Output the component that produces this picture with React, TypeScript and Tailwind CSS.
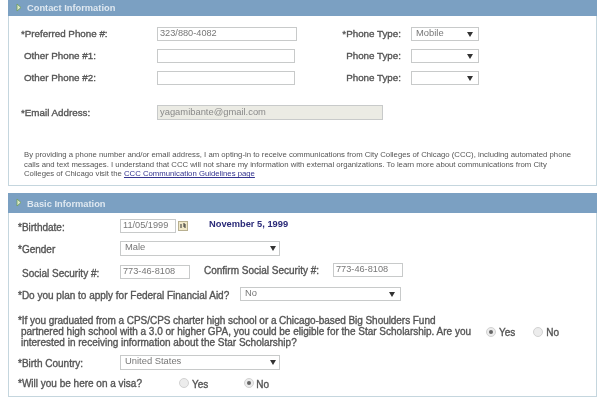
import React from "react";

const Caret = () => (
  <svg width="6" height="5" viewBox="0 0 6 5" className="shrink-0"><path d="M0 0H6L3 5Z" fill="#333" /></svg>
);

const Select = ({ value, className }: { value?: string; className: string }) => (
  <div className={`flex items-center justify-between border border-[#c8caca] bg-white pl-1 text-[9.4px] text-[#777] ${className}`}>
    <span className="-mt-[2px]">{value}</span>
    <Caret />
  </div>
);

const Field = ({ value, className }: { value?: string; className: string }) => (
  <div className={`flex items-center border border-[#c8caca] bg-white pl-[2px] text-[9.2px] text-[#777] ${className}`}>{value}</div>
);

const Radio = ({ on }: { on?: boolean }) => (
  <span className="flex h-[10px] w-[10px] shrink-0 items-center justify-center rounded-full border border-[#d2d2d2] bg-[#ececec]">
    {on && <span className="h-[4px] w-[4px] rounded-full bg-[#666]" />}
  </span>
);

const Header = ({ title, className, titleClass }: { title: string; className: string; titleClass: string }) => (
  <div className={`flex items-center bg-[#7ba0c2] pl-[8px] ${className}`}>
    <svg width="6" height="9" viewBox="0 0 6 9" className="mr-[5px] -mt-[2px]"><path d="M1 1L5 4.5L1 8Z" fill="#dbe8c8" stroke="#6e9e58" strokeWidth="0.8" /></svg>
    <span className={`text-[9.3px] font-bold text-[#dfe8f0] ${titleClass}`}>{title}</span>
  </div>
);

const label = "text-[10px] text-[#555] [-webkit-text-stroke:0.35px_#555]";
const small = "mt-[1px] text-[9.8px] text-[#555] [-webkit-text-stroke:0.35px_#555]";

export default function App() {
  return (
    <div className="h-[401px] w-[604px] overflow-hidden bg-white pl-[8px] [font-family:'Liberation_Sans',Arial,sans-serif] blur-[0.3px]">
      <section className="h-[186px] w-[589px] border-x border-b border-[#c5d6de]">
        <Header title="Contact Information" titleClass="mt-[1px]" className="h-[16px] -mx-px" />
        <div className="flex h-[14px] items-center mt-[11px]">
          <div className={`${small} w-[148px] pl-[12px]`}>*Preferred Phone #:</div>
          <Field value="323/880-4082" className="h-[14px] w-[140px]" />
          <div className={`${small} w-[104px] text-right`}>*Phone Type:</div>
          <Select value="Mobile" className="ml-[10px] h-[14px] w-[68px] pr-[5px]" />
        </div>
        <div className="flex h-[14px] items-center mt-[8px]">
          <div className={`${small} w-[148px] pl-[15px]`}>Other Phone #1:</div>
          <Field className="h-[14px] w-[138px]" />
          <div className={`${small} w-[106px] text-right`}>Phone Type:</div>
          <Select className="ml-[10px] h-[14px] w-[68px] pr-[5px]" />
        </div>
        <div className="flex h-[14px] items-center mt-[8px]">
          <div className={`${small} w-[148px] pl-[15px]`}>Other Phone #2:</div>
          <Field className="h-[14px] w-[138px]" />
          <div className={`${small} w-[106px] text-right`}>Phone Type:</div>
          <Select className="ml-[10px] h-[14px] w-[68px] pr-[5px]" />
        </div>
        <div className="flex h-[15px] items-center mt-[20px]">
          <div className={`${small} w-[148px] pl-[12px]`}>*Email Address:</div>
          <Field value="yagamibante@gmail.com" className="h-[15px] w-[226px] !bg-[#ebebe4] !text-[#8a8a8a] text-[9.4px]" />
        </div>
        <p className="mt-[30px] pl-[15px] text-[7.75px] leading-[9.7px] text-[#555]">
          By providing a phone number and/or email address, I am opting-in to receive communications from City Colleges of Chicago (CCC), including automated phone<br />
          calls and text messages. I understand that CCC will not share my information with external organizations. To learn more about communications from City<br />
          Colleges of Chicago visit the <span className="text-[#33338f] underline">CCC Communication Guidelines page</span>
        </p>
      </section>

      <section className="mt-[7px] h-[204px] w-[589px] border-x border-b border-[#c5d6de]">
        <Header title="Basic Information" titleClass="mt-[3px]" className="h-[20px] -mx-px" />
        <div className="flex h-[14px] items-center mt-[6px]">
          <div className={`${label} w-[111px] pl-[9px] mt-[2px]`}>*Birthdate:</div>
          <Field value="11/05/1999" className="h-[14px] w-[56px]" />
          <svg width="10" height="10" viewBox="0 0 10 10" className="ml-[2px]">
            <rect x="0.5" y="0.5" width="9" height="9" fill="#f0e8c8" stroke="#b8b090" />
            <path d="M3 3V7M5 3H7V7M5 5H7" stroke="#333" strokeWidth="1" fill="none" />
          </svg>
          <div className="ml-[21px] -mt-[3px] text-[9.3px] font-bold text-[#2a2a78]">November 5, 1999</div>
        </div>
        <div className="flex h-[15px] items-center mt-[8px]">
          <div className={`${label} w-[111px] pl-[9px] mt-[2px]`}>*Gender</div>
          <Select value="Male" className="h-[15px] w-[160px] pr-[3px]" />
        </div>
        <div className="flex h-[14px] items-center mt-[9px]">
          <div className={`${label} w-[111px] pl-[13px] mt-[2px]`}>Social Security #:</div>
          <Field value="773-46-8108" className="h-[14px] w-[70px]" />
          <div className={`${label} ml-[14px] w-[129px] -mt-[4px] whitespace-nowrap`}>Confirm Social Security #:</div>
          <Field value="773-46-8108" className="h-[14px] w-[70px] -mt-[4px]" />
        </div>
        <div className="flex h-[14px] items-center mt-[8px]">
          <div className={`${label} w-[231px] pl-[9px] mt-[2px] whitespace-nowrap`}>*Do you plan to apply for Federal Financial Aid?</div>
          <Select value="No" className="h-[14px] w-[161px] pr-[5px]" />
        </div>
        <div className="mt-[14px] flex items-center">
          <div className={`${label} w-[477px] shrink-0 whitespace-nowrap pl-[9px] leading-[11px]`}>
            <span className="tracking-[-0.05px]">*If you graduated from a CPS/CPS charter high school or a Chicago-based Big Shoulders Fund</span><br />
            <span className="pl-[3px]">partnered high school with a 3.0 or higher GPA, you could be eligible for the Star Scholarship. Are you</span><br />
            <span className="pl-[3px]">interested in receiving information about the Star Scholarship?</span>
          </div>
          <div className={`flex items-center ${label}`}>
            <Radio on /><span className="ml-[3px] mt-[2px]">Yes</span>
            <span className="ml-[18px]"><Radio /></span><span className="ml-[3px] mt-[2px]">No</span>
          </div>
        </div>
        <div className="flex h-[15px] items-center mt-[7px]">
          <div className={`${label} w-[111px] pl-[9px] mt-[1px]`}>*Birth Country:</div>
          <Select value="United States" className="h-[15px] w-[160px] pr-[3px]" />
        </div>
        <div className={`flex h-[14px] items-center mt-[6px] ${label}`}>
          <div className="w-[170px] pl-[9px]">*Will you be here on a visa?</div>
          <Radio /><span className="ml-[3px] mt-[3px]">Yes</span>
          <span className="ml-[36px]"><Radio on /></span><span className="ml-[2px] mt-[3px]">No</span>
        </div>
      </section>
    </div>
  );
}
